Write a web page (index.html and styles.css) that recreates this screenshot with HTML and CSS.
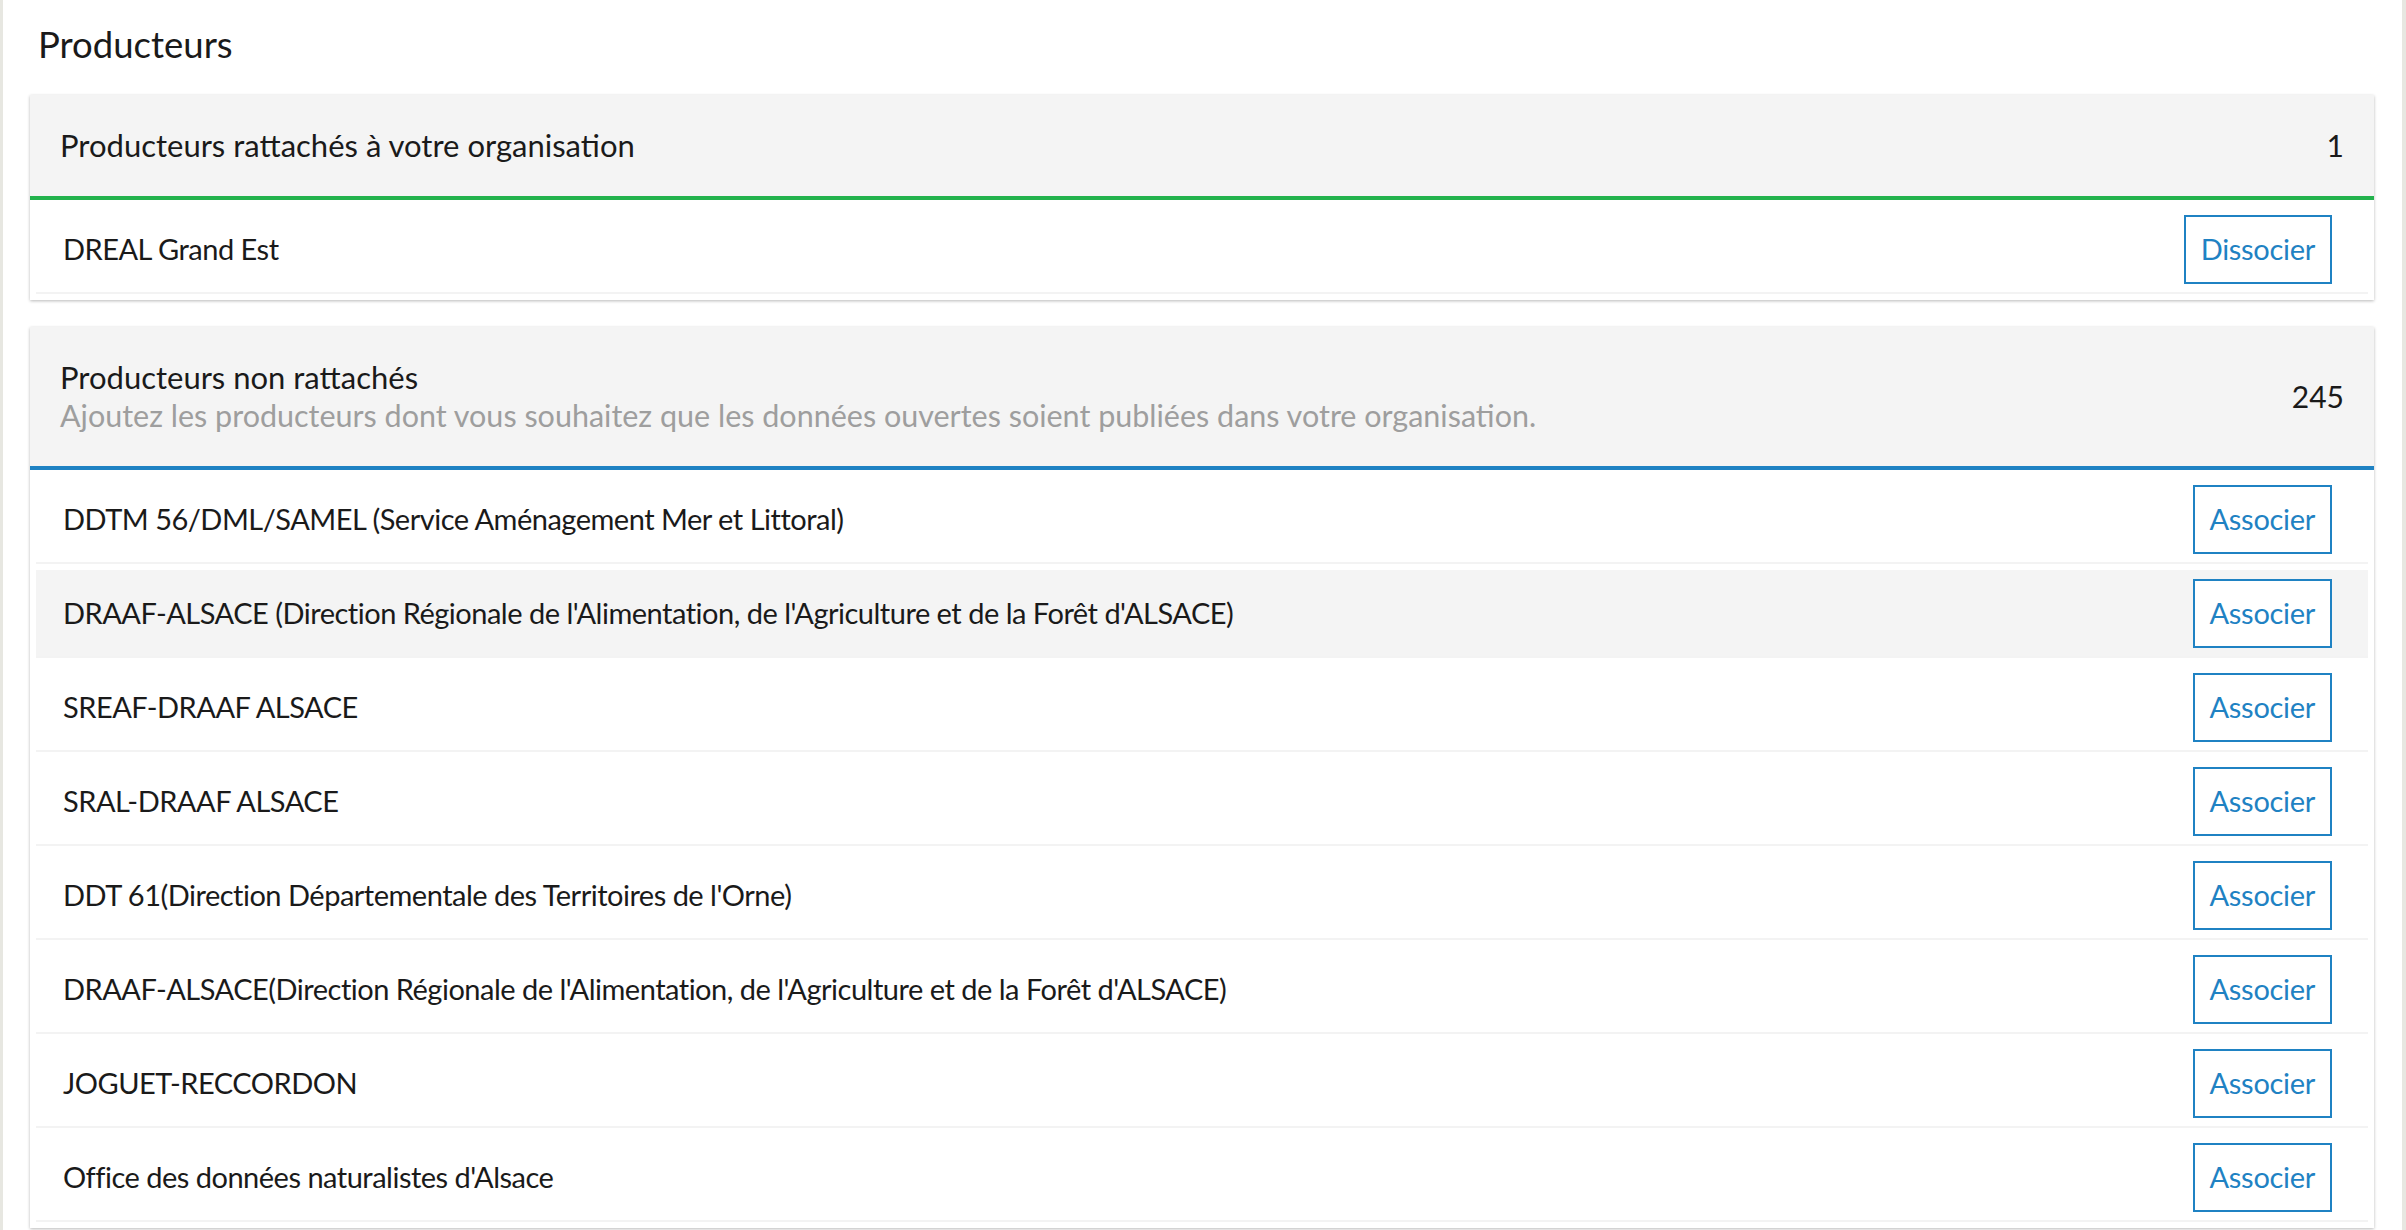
FILE: index.html
```html
<!DOCTYPE html>
<html lang="fr">
<head>
<meta charset="utf-8">
<title>Producteurs</title>
<link rel="stylesheet" href="styles.css">
</head>
<body>
<div class="page">
  <h1 class="page-title">Producteurs</h1>

  <section class="card">
    <header class="card-header card-header--green">
      <div class="card-heading">
        <div class="card-title">Producteurs rattachés à votre organisation</div>
      </div>
      <div class="card-count">1</div>
    </header>
    <ul class="rows">
      <li class="row">
        <span class="row-name">DREAL Grand Est</span>
        <button class="btn">Dissocier</button>
      </li>
    </ul>
  </section>

  <section class="card">
    <header class="card-header card-header--blue">
      <div class="card-heading">
        <div class="card-title">Producteurs non rattachés</div>
        <div class="card-subtitle">Ajoutez les producteurs dont vous souhaitez que les données ouvertes soient publiées dans votre organisation.</div>
      </div>
      <div class="card-count">245</div>
    </header>
    <ul class="rows">
      <li class="row"><span class="row-name">DDTM 56/DML/SAMEL (Service Aménagement Mer et Littoral)</span><button class="btn">Associer</button></li>
      <li class="row row--hover"><span class="row-name">DRAAF-ALSACE (Direction Régionale de l'Alimentation, de l'Agriculture et de la Forêt d'ALSACE)</span><button class="btn">Associer</button></li>
      <li class="row"><span class="row-name">SREAF-DRAAF ALSACE</span><button class="btn">Associer</button></li>
      <li class="row"><span class="row-name">SRAL-DRAAF ALSACE</span><button class="btn">Associer</button></li>
      <li class="row"><span class="row-name">DDT 61(Direction Départementale des Territoires de l'Orne)</span><button class="btn">Associer</button></li>
      <li class="row"><span class="row-name">DRAAF-ALSACE(Direction Régionale de l'Alimentation, de l'Agriculture et de la Forêt d'ALSACE)</span><button class="btn">Associer</button></li>
      <li class="row"><span class="row-name">JOGUET-RECCORDON</span><button class="btn">Associer</button></li>
      <li class="row"><span class="row-name">Office des données naturalistes d'Alsace</span><button class="btn">Associer</button></li>
    </ul>
  </section>
</div>
</body>
</html>
```

FILE: styles.css
```css
html, body {
  margin: 0;
  padding: 0;
  height: 1230px;
  overflow: hidden;
}

body {
  background: #e7e7e1;
  font-family: Lato, "Open Sans", "Liberation Sans", sans-serif;
  color: #1a1a1a;
  padding: 0 4px 0 3px;
}

.page {
  background: #ffffff;
  min-height: 1230px;
  padding: 22px 28px 0 27px;
}

.page-title {
  margin: 0 0 29px 0;
  padding-left: 8px;
  font-size: 36.5px;
  line-height: 44px;
  font-weight: 400;
  color: #1a1a1a;
}

.card {
  background: #ffffff;
  box-shadow: 0 1px 3px rgba(0, 0, 0, 0.28);
  margin-bottom: 27px;
}

.card-header {
  display: flex;
  align-items: center;
  justify-content: space-between;
  background: #f4f4f4;
  padding: 31px 30px 32px 30px;
  font-size: 31px;
  line-height: 38px;
}

.card-header--green {
  border-bottom: 4px solid #22b24c;
}

.card-header--blue {
  border-bottom: 4px solid #1f82c3;
}

.card-title {
  color: #1a1a1a;
}

.card-subtitle {
  color: #9e9e9e;
  font-size: 30.5px;
}

.card-count {
  color: #1a1a1a;
  font-size: 30px;
}

.rows {
  list-style: none;
  margin: 0;
  padding: 0 6px 6px 6px;
}

.row {
  display: flex;
  align-items: center;
  justify-content: space-between;
  height: 86px;
  margin-top: 6px;
  padding: 0 36px 0 27px;
  border-bottom: 2px solid #f3f3f3;
  font-size: 29px;
  letter-spacing: -0.5px;
  line-height: 38px;
}

.row--hover {
  background: #f4f4f4;
}

.row-name {
  color: #1a1a1a;
}

.btn {
  box-sizing: border-box;
  height: 69px;
  padding: 0 15px;
  border: 2px solid #1f82c3;
  background: #ffffff;
  color: #1f82c3;
  font-family: Lato, "Open Sans", "Liberation Sans", sans-serif;
  font-size: 29px;
  letter-spacing: -0.3px;
  line-height: 38px;
  cursor: pointer;
}
```
